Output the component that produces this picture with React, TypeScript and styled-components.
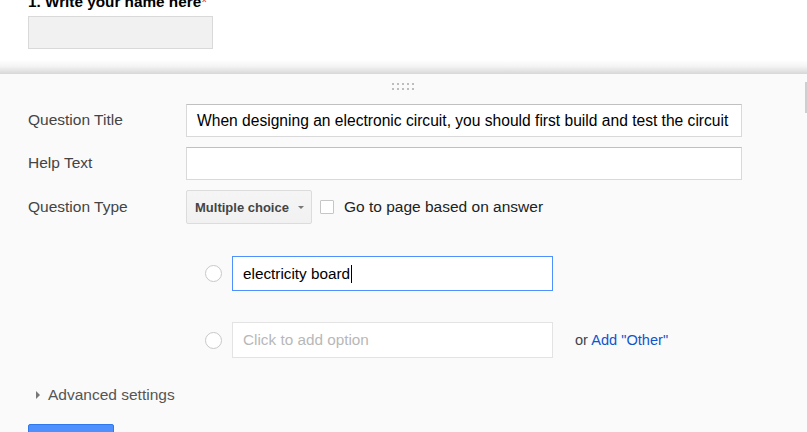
import React from "react";
import styled, { createGlobalStyle } from "styled-components";

const Global = createGlobalStyle`
  html, body { margin: 0; padding: 0; background: #fff; }
  body { font-family: "Liberation Sans", Arial, sans-serif; overflow: hidden; }
  * { box-sizing: border-box; }
`;

const Page = styled.div`
  width: 807px;
  height: 432px;
  overflow: hidden;
  position: relative;
  background: #fff;
`;

const Top = styled.div`
  padding-left: 28px;
  display: flex;
  flex-direction: column;
`;

const ItemTitle = styled.div`
  margin-top: -7px;
  font-size: 15.3px;
  font-weight: bold;
  color: #000;
  line-height: 17px;
`;

const Req = styled.span`
  color: #dd4b39;
  font-weight: normal;
`;

const GrayInput = styled.div`
  margin-top: 6px;
  width: 185px;
  height: 33px;
  background: #f1f1f1;
  border: 1px solid #d9d9d9;
`;

const ShadowStrip = styled.div`
  margin-top: 11px;
  height: 14px;
  background: linear-gradient(to bottom, #ffffff 0%, #f4f4f4 45%, #d7d7d7 100%);
`;

const Panel = styled.div`
  background: #fafafa;
  height: 400px;
  padding: 8px 0 0 28px;
  display: flex;
  flex-direction: column;
  position: relative;
`;

const Handle = styled.div`
  height: 8px;
  display: flex;
  justify-content: center;
  padding-right: 28px;
  margin-bottom: 14px;
`;

const Rows = styled.div`
  display: grid;
  grid-template-columns: 158px 556px;
  row-gap: 10px;
  align-items: center;
`;

const Label = styled.div`
  font-size: 15.5px;
  color: #444;
  margin-top: -1px;
`;

const TextBox = styled.div`
  height: 33px;
  background: #fff;
  border: 1px solid #d9d9d9;
  border-top-color: #c0c0c0;
  font-size: 15.6px;
  color: #000;
  padding-left: 10px;
  display: flex;
  align-items: center;
  white-space: nowrap;
  overflow: hidden;
`;

const TypeRow = styled.div`
  display: flex;
  align-items: center;
`;

const SelectButton = styled.div`
  width: 126px;
  height: 34px;
  border: 1px solid #dcdcdc;
  border-radius: 2px;
  background: linear-gradient(#f5f5f5, #f1f1f1);
  font-size: 13px;
  font-weight: bold;
  color: #444;
  display: flex;
  align-items: center;
  padding-left: 8px;
  gap: 9px;
`;

const Caret = styled.span`
  width: 0;
  height: 0;
  border-left: 3px solid transparent;
  border-right: 3px solid transparent;
  border-top: 3px solid #777;
`;

const Check = styled.span`
  width: 14px;
  height: 14px;
  border: 1px solid #c6c6c6;
  border-radius: 1px;
  background: #fff;
  margin-left: 8px;
  margin-right: 10px;
`;

const CheckLabel = styled.span`
  font-size: 15.5px;
  color: #222;
`;

const Options = styled.div`
  margin-top: 32px;
  display: flex;
  flex-direction: column;
  gap: 31px;
  padding-left: 177px;
`;

const OptionRow = styled.div`
  display: flex;
  align-items: center;
`;

const Radio = styled.span`
  width: 17px;
  height: 17px;
  border-radius: 50%;
  border: 1px solid #c8c8c8;
  background: #fff;
  margin-right: 10px;
  flex: none;
`;

const OptionBox = styled.div<{ $active?: boolean }>`
  width: 321px;
  height: ${(p) => (p.$active ? 35 : 36)}px;
  border: 1px solid ${(p) => (p.$active ? "#4d90fe" : "#e3e3e3")};
  background: #fff;
  font-size: 15.3px;
  color: ${(p) => (p.$active ? "#000" : "#b8b8b8")};
  padding-left: 10px;
  display: flex;
  align-items: center;
`;

const Cursor = styled.span`
  display: inline-block;
  width: 1px;
  height: 18px;
  background: #000;
  margin-left: 1px;
`;

const OrText = styled.span`
  margin-left: 22px;
  font-size: 14.6px;
  color: #444;
`;

const Link = styled.span`
  color: #1155cc;
`;

const Advanced = styled.div`
  margin-top: 28px;
  height: 18px;
  display: flex;
  align-items: center;
  padding-left: 8px;
  font-size: 15.5px;
  color: #555;
`;

const Tri = styled.span`
  width: 0;
  height: 0;
  border-top: 4px solid transparent;
  border-bottom: 4px solid transparent;
  border-left: 4px solid #777;
  margin-right: 8px;
`;

const DoneButton = styled.div`
  margin-top: 20px;
  width: 86px;
  height: 30px;
  background: #4d90fe;
  border: 1px solid #3079ed;
  border-radius: 2px;
`;

const ScrollThumb = styled.div`
  position: absolute;
  right: 0;
  top: 8px;
  width: 2px;
  height: 31px;
  background: #cfcfcf;
`;

const Dots = () => (
  <svg width="24" height="8" viewBox="0 0 24 8">
    {[0, 1].map((r) =>
      [0, 1, 2, 3, 4].map((c) => (
        <rect key={`${r}-${c}`} x={c * 5} y={r * 5 + 1} width="2" height="2" fill="#bdbdbd" />
      ))
    )}
  </svg>
);

export default function App() {
  return (
    <Page>
      <Global />
      <Top>
        <ItemTitle>
          1. Write your name here<Req>*</Req>
        </ItemTitle>
        <GrayInput />
      </Top>
      <ShadowStrip />
      <Panel>
        <ScrollThumb />
        <Handle>
          <Dots />
        </Handle>
        <Rows>
          <Label>Question Title</Label>
          <TextBox>When designing an electronic circuit, you should first build and test the circuit</TextBox>
          <Label>Help Text</Label>
          <TextBox />
          <Label>Question Type</Label>
          <TypeRow>
            <SelectButton>
              Multiple choice <Caret />
            </SelectButton>
            <Check />
            <CheckLabel>Go to page based on answer</CheckLabel>
          </TypeRow>
        </Rows>
        <Options>
          <OptionRow>
            <Radio />
            <OptionBox $active>
              electricity board
              <Cursor />
            </OptionBox>
          </OptionRow>
          <OptionRow>
            <Radio />
            <OptionBox>Click to add option</OptionBox>
            <OrText>
              or <Link>Add "Other"</Link>
            </OrText>
          </OptionRow>
        </Options>
        <Advanced>
          <Tri />
          Advanced settings
        </Advanced>
        <DoneButton />
      </Panel>
    </Page>
  );
}
